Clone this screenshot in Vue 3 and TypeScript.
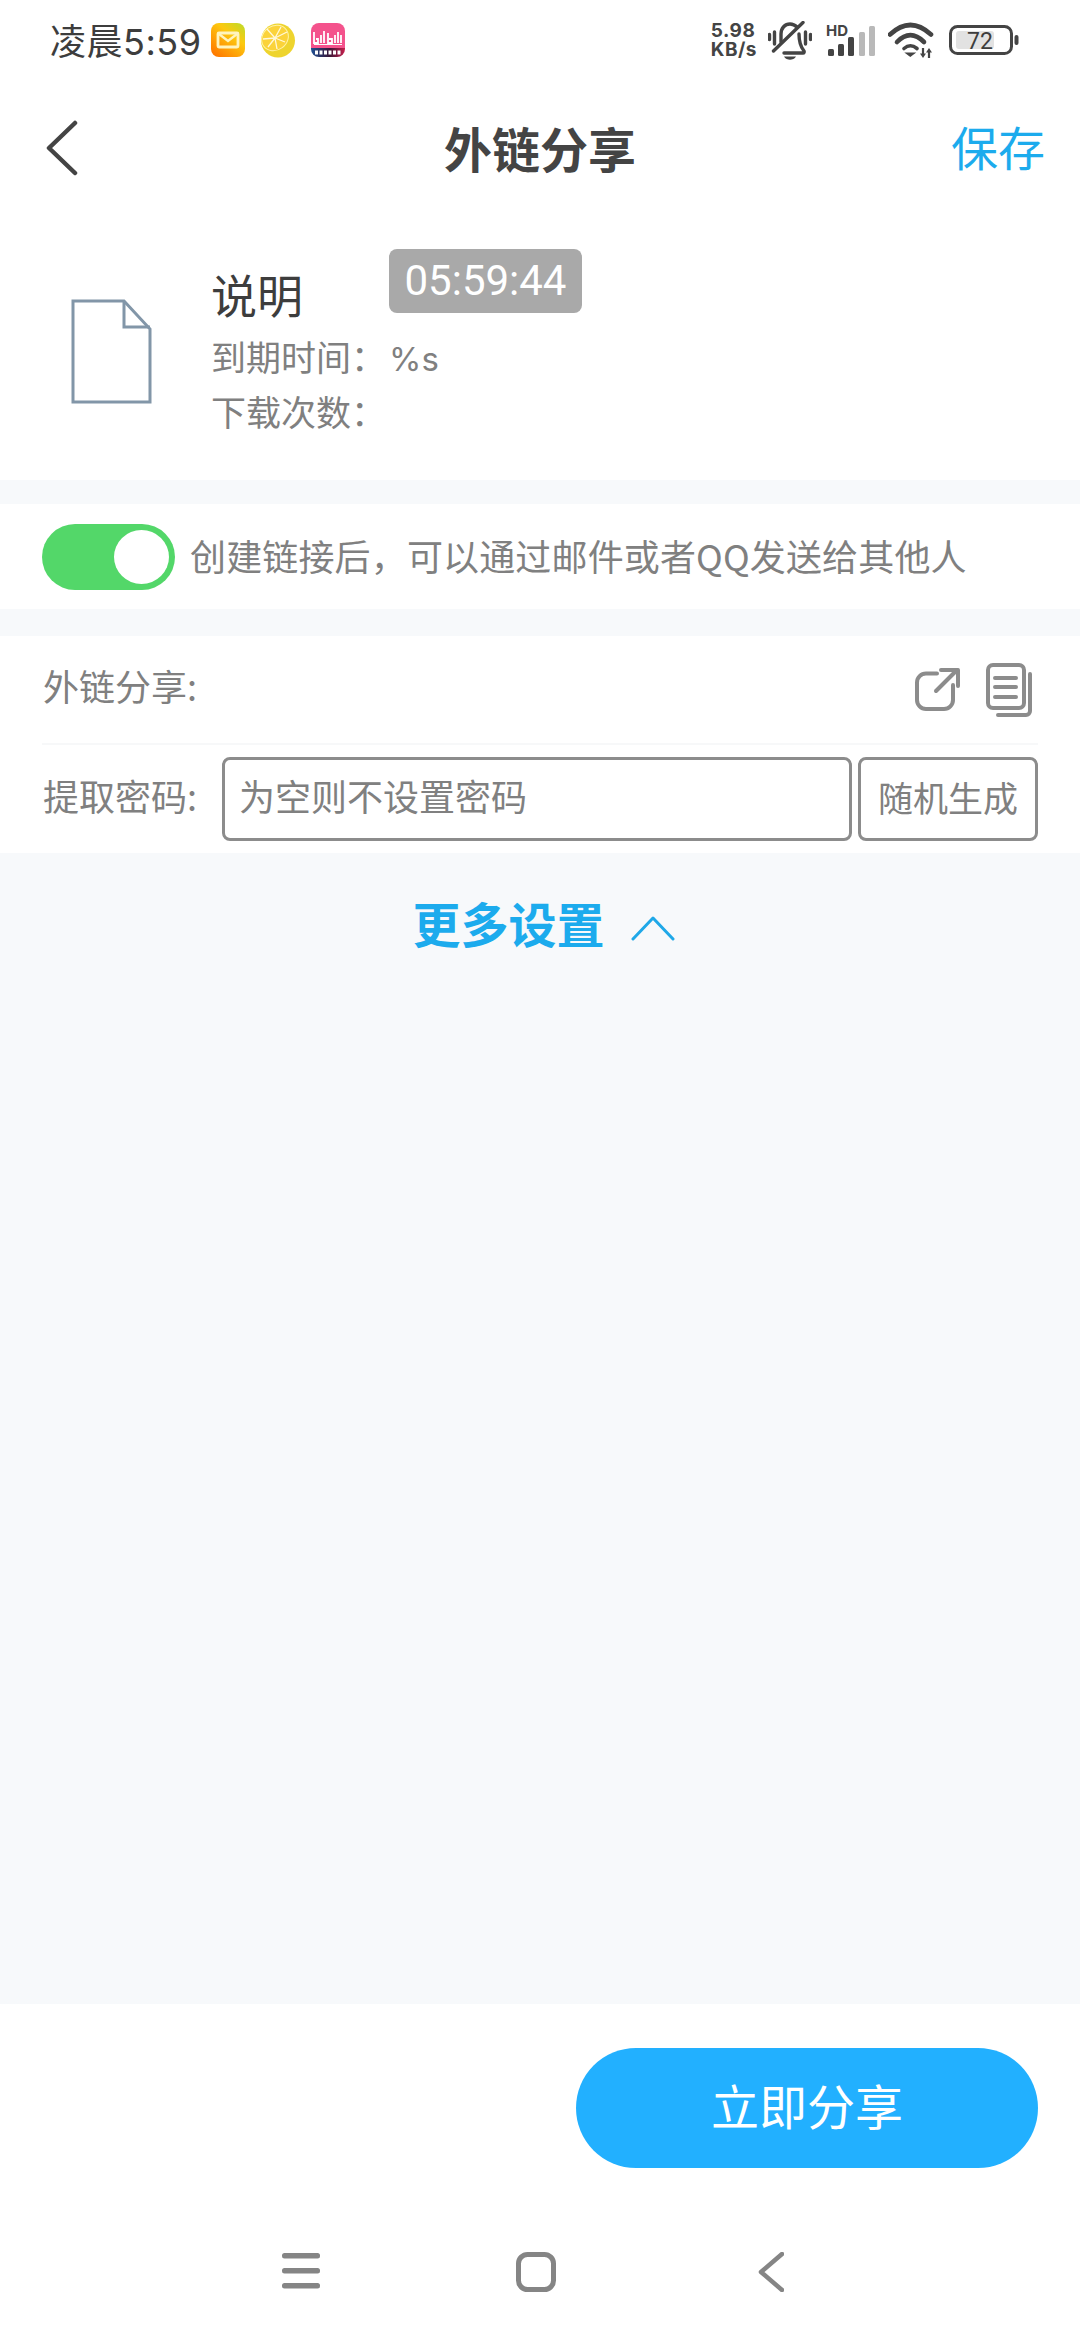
<script setup lang="ts">
import { ref } from 'vue'

/** 外链分享页 */
const enabled = ref(true)
const password = ref('')
const signalBars = [
  { x: 3, h: 7, c: '#444' },
  { x: 13, h: 12, c: '#444' },
  { x: 23, h: 19, c: '#444' },
  { x: 34, h: 24, c: '#b9b9b9' },
  { x: 44, h: 30, c: '#b9b9b9' },
]
</script>

<template>
  <div class="page">
    <div class="top">
      <div class="status">
        <span class="clock">凌晨5:59</span>
        <svg class="note mail" width="34" height="34" viewBox="0 0 34 34">
          <defs>
            <linearGradient id="mailBg" x1="1" y1="0" x2="0.2" y2="1">
              <stop offset="0" stop-color="#b9dc2c" />
              <stop offset="0.4" stop-color="#fdc90f" />
              <stop offset="1" stop-color="#ff7a00" />
            </linearGradient>
          </defs>
          <rect width="34" height="34" rx="8" fill="url(#mailBg)" />
          <rect x="7" y="10" width="20" height="14" rx="1" fill="none" stroke="#fff4bd" stroke-width="2.8" />
          <path d="M8 11l9 7 9-7" fill="none" stroke="#fff4bd" stroke-width="2.4" />
        </svg>
        <svg class="note" width="36" height="35" viewBox="0 0 36 35">
          <circle cx="18" cy="17.5" r="17" fill="#eed42e" />
          <ellipse cx="15" cy="15" rx="14" ry="12" transform="rotate(-35 15 15)" fill="#fbd33a" stroke="#fff3a8" stroke-width="1" />
          <path d="M15 15L7 6M15 15L21 4M15 15L3 16M15 15L27 9M15 15L8 24M15 15L17 26M15 15L25 19" stroke="#fff8d8" stroke-width="1.3" />
        </svg>
        <svg class="note" width="34" height="34" viewBox="0 0 34 34">
          <defs>
            <linearGradient id="biliBand" x1="0" y1="0" x2="1" y2="0">
              <stop offset="0" stop-color="#1d4f93" />
              <stop offset="0.55" stop-color="#3a1636" />
              <stop offset="1" stop-color="#c81f4c" />
            </linearGradient>
            <clipPath id="biliClip"><rect width="34" height="34" rx="8" /></clipPath>
          </defs>
          <g clip-path="url(#biliClip)">
            <rect width="34" height="25" fill="#f4528c" />
            <rect y="25" width="34" height="9" fill="url(#biliBand)" />
            <path d="M3 9v11h4v-4H5M10 12v8M13 8v12M17 10v10h4v-4h-3M24 12v8M27 9v11M30 12v8" fill="none" stroke="#fff" stroke-width="1.8" />
            <path d="M3 21.5h28" stroke="#fff" stroke-width="1" />
            <path d="M4 29.500h26" stroke="#fff" stroke-width="4" stroke-dasharray="3 1.500" />
          </g>
        </svg>
        <div class="status-right">
          <div class="speed"><span>5.98</span><span>KB/s</span></div>
          <svg class="bell" width="44" height="39" viewBox="0 0 44 39" fill="none" stroke="#444" stroke-width="3.4" stroke-linecap="round">
            <path d="M1.500 13.500v5M6.500 11v12M37.500 11v12M42.500 13.500v5" />
            <path d="M13 21V13C13 7 17 3 22 3c3 0 5 1 7 3M31 13c0 7 1 12 5 17 .5 1 0 2-1 2H16" />
            <path d="M5.500 30L35 1.500" />
            <path d="M16 35.500h12c-1 2.500-4 3.200-6 3.200s-5-.7-6-3.200z" fill="#444" stroke="none" />
          </svg>
          <svg class="signal" width="50" height="38" viewBox="0 0 50 38">
            <text x="1" y="15" class="hd">HD</text>
            <rect v-for="b in signalBars" :key="b.x" :x="b.x" :y="35 - b.h" width="6" :height="b.h" rx="1.500" :fill="b.c" />
          </svg>
          <svg width="46" height="36" viewBox="0 0 46 36" fill="none" stroke="#444" stroke-width="4.600" stroke-linecap="round">
            <path d="M2 12.500Q22.300-6.500 43 12.500" />
            <path d="M9 20Q22.300 6.300 36 20" />
            <path d="M16 26.500Q22.300 21 29 26.500" stroke-width="3.600" />
            <path d="M22.300 35l-6-4.500h12z" fill="#444" stroke="none" />
            <path d="M35 26v6M41 36v-6" stroke-width="2.200" stroke-linecap="butt" />
            <path d="M32 31.500h6l-3 4.500zM38 30.500h6l-3-4.500z" fill="#444" stroke="none" />
          </svg>
          <svg class="battery" width="70" height="30" viewBox="0 0 70 30">
            <rect x="7" y="6" width="38" height="18" rx="3" fill="#e2e2e2" />
            <rect x="1.500" y="1.500" width="61" height="27" rx="7" fill="none" stroke="#444" stroke-width="3" />
            <rect x="65.500" y="10" width="4" height="10" rx="2" fill="#444" />
            <text x="31" y="24" class="battery-num">72</text>
          </svg>
        </div>
      </div>

      <div class="header">
        <svg class="back" width="32" height="56" viewBox="0 0 32 56" fill="none" stroke="#444" stroke-width="4.500" stroke-linecap="round" stroke-linejoin="round">
          <path d="M29 3L3 28l26 25" />
        </svg>
        <div class="title">外链分享</div>
        <div class="save">保存</div>
      </div>

      <div class="file-card">
        <svg class="file-icon" width="81" height="105" viewBox="0 0 81 105" fill="none" stroke="#8296a8" stroke-width="3">
          <path d="M2 2h51l26 28v73H2z" />
          <path d="M53 2v26h26" />
        </svg>
        <div class="file-info">
          <div class="file-name">说明</div>
          <div class="file-meta">到期时间：<span class="meta-value">%s</span></div>
          <div class="file-meta">下载次数：</div>
          <div class="time-badge">05:59:44</div>
        </div>
      </div>
    </div>

    <div class="switch-row">
      <button class="switch" :class="{ on: enabled }" type="button" @click="enabled = !enabled">
        <span class="knob"></span>
      </button>
      <span class="switch-text">创建链接后，可以通过邮件或者QQ发送给其他人</span>
    </div>

    <div class="form">
      <div class="link-row">
        <span class="label">外链分享:</span>
        <div class="link-actions">
          <svg width="46" height="46" viewBox="0 0 46 46" fill="none" stroke="#8c8c8c" stroke-width="4" stroke-linecap="round" stroke-linejoin="round">
            <path d="M22 6.500H11a9 9 0 0 0-9 9V33a9 9 0 0 0 9 9h18a9 9 0 0 0 9-9V18" />
            <path d="M21 24L42 3" />
            <path d="M26 3h17v16" />
          </svg>
          <svg width="48" height="54" viewBox="0 0 48 54" fill="none" stroke="#8c8c8c" stroke-width="4" stroke-linecap="round" stroke-linejoin="round">
            <rect x="3" y="2" width="36" height="43" rx="5" />
            <path d="M10 15h21M10 24h21M10 34h21" />
            <path d="M45 11v37a4 4 0 0 1-4 4H13" />
          </svg>
        </div>
      </div>
      <div class="pwd-row">
        <span class="label">提取密码:</span>
        <input v-model="password" class="pwd-input" type="text" placeholder="为空则不设置密码" />
        <button class="random-btn" type="button">随机生成</button>
      </div>
    </div>

    <div class="more">
      <span class="more-text">更多设置</span>
      <svg width="44" height="26" viewBox="0 0 44 26" fill="none" stroke="#1fa8e8" stroke-width="3" stroke-linecap="round" stroke-linejoin="round">
        <path d="M2 24L22 3l20 21" />
      </svg>
    </div>

    <div class="spacer"></div>

    <div class="footer">
      <div class="footer-action">
        <button class="share-btn" type="button">立即分享</button>
      </div>
      <div class="nav">
        <div class="nav-cell">
          <svg width="38" height="38" viewBox="0 0 38 38" fill="#858585">
            <rect y="0" width="38" height="5.500" rx="2.500" />
            <rect y="15" width="38" height="5.500" rx="2.500" />
            <rect y="30" width="38" height="5.500" rx="2.500" />
          </svg>
        </div>
        <div class="nav-cell">
          <svg width="40" height="40" viewBox="0 0 40 40" fill="none" stroke="#858585" stroke-width="5">
            <rect x="2.500" y="2.500" width="35" height="35" rx="9" />
          </svg>
        </div>
        <div class="nav-cell">
          <svg width="26" height="40" viewBox="0 0 26 40" fill="none" stroke="#858585" stroke-width="4.500" stroke-linecap="round" stroke-linejoin="round">
            <path d="M24 2L3 20l21 18" />
          </svg>
        </div>
      </div>
    </div>
  </div>
</template>

<style scoped>
.page {
  display: flex;
  flex-direction: column;
  width: 1080px;
  height: 2340px;
  overflow: hidden;
  background: #f7f9fb;
  font-family: "Noto Sans CJK SC", "Roboto", sans-serif;
  color: #808080;
}

.top {
  background: #fff;
}

.status {
  display: flex;
  align-items: center;
  height: 80px;
  padding: 0 61px 0 50px;
}

.clock {
  padding-bottom: 3px;
  font-family: "Inter", "Noto Sans CJK SC", sans-serif;
  font-size: 36px;
  letter-spacing: 0.5px;
  color: #3d3d3d;
  white-space: nowrap;
}

.note {
  margin-left: 15px;
}

.mail {
  margin-left: 10px;
}

.status-right {
  display: flex;
  align-items: center;
  gap: 13px;
  margin-left: auto;
}

.speed {
  display: flex;
  flex-direction: column;
  font-family: "Inter", sans-serif;
  font-size: 19px;
  font-weight: 700;
  line-height: 19px;
  letter-spacing: 0.5px;
  color: #444;
}

.bell {
  margin-left: -2px;
}

.battery {
  margin-left: 2px;
}

.hd {
  font-family: "Inter", sans-serif;
  font-size: 15px;
  font-weight: 700;
  fill: #444;
}

.battery-num {
  font-family: "Roboto", sans-serif;
  font-size: 23px;
  fill: #3d3d3d;
  text-anchor: middle;
}

.header {
  display: grid;
  grid-template-columns: 1fr auto 1fr;
  align-items: center;
  height: 136px;
  padding: 0 35px;
}

.back {
  margin-left: 11px;
}

.title {
  padding-bottom: 3px;
  font-size: 48px;
  font-weight: 700;
  color: #444;
}

.save {
  justify-self: end;
  padding-bottom: 6px;
  font-size: 47px;
  color: #1cabed;
}

.file-card {
  display: flex;
  align-items: flex-start;
  gap: 59px;
  height: 264px;
  padding-left: 71px;
}

.file-icon {
  margin-top: 83px;
}

.file-info {
  position: relative;
  padding-top: 47px;
}

.file-name {
  font-size: 46px;
  line-height: 60px;
  color: #3d3d3d;
}

.file-meta {
  height: 55px;
  font-size: 35px;
  line-height: 55px;
}

.file-name + .file-meta {
  margin-top: 5px;
}

.meta-value {
  margin-left: 3px;
  font-family: "Inter", sans-serif;
  font-size: 33px;
}

.time-badge {
  position: absolute;
  top: 33px;
  left: 178px;
  width: 193px;
  height: 64px;
  border-radius: 8px;
  background: #a9a9a9;
  color: #fff;
  font-family: "Roboto", sans-serif;
  font-size: 42px;
  line-height: 64px;
  text-align: center;
}

.switch-row {
  display: flex;
  align-items: center;
  gap: 15px;
  height: 105px;
  margin-top: 24px;
  padding-left: 42px;
  background: #fff;
}

.switch {
  display: flex;
  justify-content: flex-start;
  align-items: center;
  width: 133px;
  height: 66px;
  padding: 0 6px;
  border: 0;
  border-radius: 33px;
  background: #ccc;
}

.switch.on {
  justify-content: flex-end;
  background: #53d769;
}

.knob {
  width: 55px;
  height: 54px;
  border-radius: 50%;
  background: #fff;
}

.switch-text {
  padding-bottom: 3px;
  font-size: 36px;
  letter-spacing: 0.15px;
}

.form {
  margin-top: 27px;
  padding: 0 42px;
  background: #fff;
}

.link-row {
  display: flex;
  justify-content: space-between;
  align-items: center;
  height: 107px;
  border-bottom: 2px solid #f7f8f9;
}

.link-actions {
  display: flex;
  align-items: center;
  gap: 24px;
  padding-right: 5px;
}

.label {
  padding-left: 1px;
  padding-bottom: 9px;
  font-size: 36px;
  white-space: nowrap;
}

.pwd-row {
  display: flex;
  align-items: center;
  gap: 6px;
  height: 108px;
}

.pwd-row .label {
  width: 173px;
}

.pwd-input {
  flex: 1;
  box-sizing: border-box;
  min-width: 0;
  height: 84px;
  padding: 0 14px 9px;
  border: 3px solid #8c8c8c;
  border-radius: 8px;
  outline: none;
  background: #fff;
  font-family: inherit;
  font-size: 36px;
  color: #555;
}

.pwd-input::placeholder {
  color: #808080;
  opacity: 1;
}

.random-btn {
  box-sizing: border-box;
  width: 180px;
  height: 84px;
  padding: 0 0 6px;
  border: 3px solid #8c8c8c;
  border-radius: 8px;
  background: #fff;
  font-family: inherit;
  font-size: 35px;
  color: #808080;
}

.more {
  display: flex;
  justify-content: center;
  align-items: center;
  gap: 26px;
  margin-top: 38px;
  padding-left: 7px;
}

.more-text {
  padding-bottom: 12px;
  font-size: 48px;
  font-weight: 700;
  line-height: 62px;
  color: #1cabed;
}

.spacer {
  flex: 1;
}

.footer {
  height: 336px;
  background: #fff;
}

.footer-action {
  display: flex;
  justify-content: flex-end;
  padding: 44px 42px 0;
}

.share-btn {
  width: 462px;
  height: 120px;
  padding: 0 0 8px;
  border: 0;
  border-radius: 60px;
  background: #22b0ff;
  color: #fff;
  font-family: inherit;
  font-size: 48px;
}

.nav {
  display: flex;
  justify-content: center;
  gap: 175px;
  margin-top: 84px;
  padding-right: 8px;
}

.nav-cell {
  display: flex;
  justify-content: center;
  align-items: center;
  width: 60px;
  height: 40px;
}
</style>
